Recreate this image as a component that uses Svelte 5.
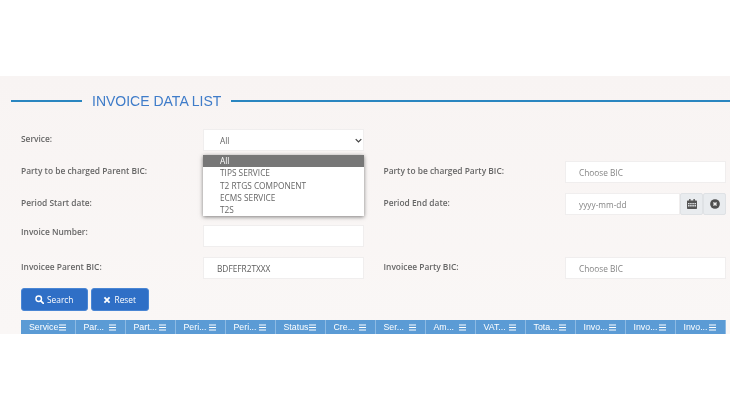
<script>
  const serviceOptions = ["All", "TIPS SERVICE", "T2 RTGS COMPONENT", "ECMS SERVICE", "T2S"];
  const columns = ["Service", "Par...", "Part...", "Peri...", "Peri...", "Status", "Cre...", "Ser...", "Am...", "VAT...", "Tota...", "Invo...", "Invo...", "Invo..."];
</script>

<main class="panel">
  <div class="title">
    <span class="rule short"></span>
    <h1>INVOICE DATA LIST</h1>
    <span class="rule"></span>
  </div>

  <form class="form" onsubmit={(e) => e.preventDefault()}>
    <span class="label">Service:</span>
    <div class="select-wrap">
      <div class="field select">
        <span>All</span>
        <svg class="chevron" viewBox="0 0 10 6" width="7" height="5">
          <path d="M1 1l4 4 4-4" fill="none" stroke="#444" stroke-width="1.8" />
        </svg>
      </div>
      <ul class="menu">
        {#each serviceOptions as option, i}
          <li class:active={i === 0}>{option}</li>
        {/each}
      </ul>
    </div>
    <span></span>
    <span></span>

    <span class="label">Party to be charged Parent BIC:</span>
    <div class="field"></div>
    <span class="label right">Party to be charged Party BIC:</span>
    <div class="field muted">Choose BIC</div>

    <span class="label">Period Start date:</span>
    <div class="field"></div>
    <span class="label right">Period End date:</span>
    <div class="date">
      <div class="field muted">yyyy-mm-dd</div>
      <button type="button" class="addon" aria-label="Open calendar">
        <svg viewBox="0 0 14 14" width="10" height="10">
          <path
            fill="#555"
            fill-rule="evenodd"
            d="M3 0h2v2h4V0h2v2h2a1 1 0 0 1 1 1v10a1 1 0 0 1-1 1H1a1 1 0 0 1-1-1V3a1 1 0 0 1 1-1h2zM1.5 5.5v2h2v-2zm3 0v2h2v-2zm3 0v2h2v-2zm3 0v2h2v-2zm-9 3v2h2v-2zm3 0v2h2v-2zm3 0v2h2v-2zm3 0v2h2v-2z"
          />
        </svg>
      </button>
      <button type="button" class="addon" aria-label="Clear date">
        <svg viewBox="0 0 14 14" width="10" height="10">
          <circle cx="7" cy="7" r="6.8" fill="#505050" />
          <path d="M4.8 4.8l4.4 4.4M9.2 4.8l-4.4 4.4" stroke="#eee" stroke-width="2" />
        </svg>
      </button>
    </div>

    <span class="label high">Invoice Number:</span>
    <div class="field"></div>
    <span></span>
    <span></span>

    <span class="label">Invoicee Parent BIC:</span>
    <div class="field value">BDFEFR2TXXX</div>
    <span class="label right">Invoicee Party BIC:</span>
    <div class="field muted">Choose BIC</div>
  </form>

  <div class="actions">
    <button type="button" class="btn search">
      <svg viewBox="0 0 14 14" width="9" height="9">
        <circle cx="5.8" cy="5.8" r="4.3" fill="none" stroke="#fff" stroke-width="2.2" />
        <path d="M9 9l4 4" stroke="#fff" stroke-width="2.6" stroke-linecap="round" />
      </svg>
      Search
    </button>
    <button type="button" class="btn reset">
      <svg viewBox="0 0 14 14" width="8" height="8">
        <path d="M2.5 2.5l9 9M11.5 2.5l-9 9" stroke="#fff" stroke-width="3.2" />
      </svg>
      Reset
    </button>
  </div>

  <div class="table-head">
    {#each columns as col}
      <div class="col">
        <span>{col}</span>
        <svg viewBox="0 0 10 9" width="7" height="7">
          <path d="M0 1h10M0 4.5h10M0 8h10" stroke="#fff" stroke-width="1.5" />
        </svg>
      </div>
    {/each}
  </div>
</main>

<style>
  :global(body) {
    background: #fff;
  }

  .panel {
    margin-top: 76px;
    height: 258px;
    overflow: hidden;
    background: linear-gradient(#f8f4f3, #faf7f6);
    padding-top: 17px;
    box-sizing: border-box;
    font-family: "Open Sans", "Noto Sans", sans-serif;
    filter: blur(0.35px);
  }

  .title {
    display: flex;
    align-items: center;
    gap: 10px;
    height: 16px;
    padding-left: 11px;
    margin-bottom: 20px;
  }

  .title h1 {
    margin: 0;
    font-family: "Liberation Sans", Arial, sans-serif;
    font-size: 14px;
    font-weight: 400;
    color: #3f7cc9;
    white-space: nowrap;
  }

  .rule {
    flex: 1;
    height: 2px;
    background: #2a86c0;
  }

  .rule.short {
    flex: 0 0 71px;
  }

  .form {
    display: grid;
    grid-template-columns: 182px 161px 201px 161px;
    grid-auto-rows: 22px;
    row-gap: 10px;
    padding-left: 21px;
  }

  .label {
    padding-top: 4px;
    font-size: 8.4px;
    line-height: 12px;
    font-weight: 600;
    color: #666;
    white-space: nowrap;
  }

  .label.right {
    padding-left: 19.5px;
  }

  .label.high {
    padding-top: 1px;
  }

  .field {
    display: flex;
    align-items: center;
    box-sizing: border-box;
    height: 22px;
    padding: 0 0 0 13px;
    background: #fff;
    border: 1px solid #f0eeee;
    font-size: 8.3px;
    color: #666;
  }

  .field.muted {
    color: #858585;
  }

  .field.value {
    color: #5c5c5c;
  }

  .select {
    justify-content: space-between;
    padding: 0 1.5px 0 16px;
  }

  .select-wrap {
    position: relative;
  }

  .menu {
    position: absolute;
    top: 26px;
    left: 0;
    right: 0;
    z-index: 5;
    margin: 0;
    padding: 0;
    list-style: none;
    background: #fff;
    box-shadow: 0 1px 4px rgba(0, 0, 0, 0.5);
    font-size: 8.3px;
    line-height: 12.3px;
    color: #666;
  }

  .menu li {
    padding-left: 17px;
  }

  .menu li.active {
    background: #777;
    color: #fff;
  }

  .date {
    display: flex;
  }

  .date .field {
    flex: 1;
    min-width: 0;
  }

  .addon {
    display: flex;
    align-items: center;
    justify-content: center;
    width: 23px;
    height: 22px;
    padding: 0;
    background: #e9ecef;
    border: 1px solid #dfe2e5;
    border-radius: 2px;
  }

  .actions {
    display: flex;
    gap: 3px;
    margin: 9px 0 9px 21px;
  }

  .btn {
    display: flex;
    align-items: center;
    justify-content: center;
    gap: 3px;
    height: 23px;
    padding: 0;
    background: #2f6fc6;
    border: 1px solid #4a86d4;
    border-radius: 3px;
    color: #fff;
    font-family: inherit;
    font-size: 8.4px;
    font-weight: 400;
  }

  .btn.search {
    width: 66.5px;
  }

  .btn.reset {
    width: 58.5px;
  }

  .table-head {
    display: flex;
    width: 705px;
    height: 24px;
    margin-left: 21px;
    background: #5b9bd5;
    color: #fff;
    font-family: "Liberation Sans", Arial, sans-serif;
    font-size: 8.8px;
  }

  .col {
    display: flex;
    flex: 0 0 50px;
    min-width: 0;
    box-sizing: border-box;
    justify-content: space-between;
    align-items: flex-start;
    padding: 2px 9px 0 8px;
    border-right: 1px solid #8dbae3;
    line-height: 11px;
  }

  .col:first-child {
    flex-basis: 54.5px;
  }

  .col svg {
    margin-top: 2px;
  }
</style>
